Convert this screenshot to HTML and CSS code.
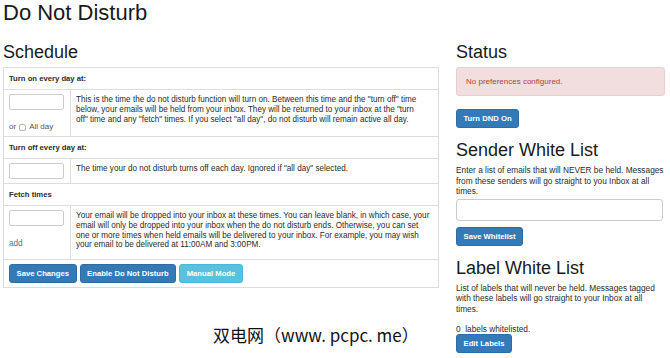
FILE: index.html
```html
<!DOCTYPE html>
<html lang="en">
<head>
  <meta charset="UTF-8">
  <meta name="viewport" content="width=device-width, initial-scale=1.0">
  <title>Do Not Disturb</title>
  <link rel="stylesheet" href="styles.css">
</head>
<body>

<div class="page">
  <h1>Do Not Disturb</h1>

  <div class="columns">
    <div class="schedule">
      <h2>Schedule</h2>
      <table class="schedule-table">
        <tr><th colspan="2">Turn on every day at:</th></tr>
        <tr>
          <td class="field">
            <input type="text" class="time-input">
            <label class="allday">or <input type="checkbox" class="check"> All day</label>
          </td>
          <td class="help">This is the time the do not disturb function will turn on. Between this time and the "turn off" time below, your emails will be held from your inbox. They will be returned to your inbox at the "turn off"&nbsp;time and any "fetch" times. If you select "all day", do not disturb will remain active all day.</td>
        </tr>
        <tr><th colspan="2">Turn off every day at:</th></tr>
        <tr>
          <td class="field"><input type="text" class="time-input"></td>
          <td class="help">The time your do not disturb turns off each day. Ignored if "all day" selected.</td>
        </tr>
        <tr><th colspan="2">Fetch times</th></tr>
        <tr>
          <td class="field">
            <input type="text" class="time-input">
            <a href="#" class="add-link">add</a>
          </td>
          <td class="help">Your email will be dropped into your inbox at these times. You can leave blank, in which case, your email will only be dropped into your inbox when the do not disturb ends. Otherwise, you can set one or more times when held emails will be delivered to your inbox. For example, you may wish your email to be delivered at 11:00AM and 3:00PM.</td>
        </tr>
        <tr>
          <td colspan="2">
            <div class="actions">
              <button class="btn btn-primary">Save Changes</button>
              <button class="btn btn-primary">Enable Do Not Disturb</button>
              <button class="btn btn-info">Manual Mode</button>
            </div>
          </td>
        </tr>
      </table>
    </div>

    <div class="sidebar">
      <h2>Status</h2>
      <div class="alert">No preferences configured.</div>
      <button class="btn btn-primary">Turn DND On</button>

      <h2 class="section">Sender White List</h2>
      <p>Enter a list of emails that will NEVER be held. Messages from these senders will go straight to you Inbox at all times.</p>
      <input type="text" class="whitelist-input">
      <button class="btn btn-primary save-whitelist">Save Whitelist</button>

      <h2 class="section">Label White List</h2>
      <p>List of labels that will never be held. Messages tagged with these labels will go straight to your Inbox at all times.</p>
      <p class="count">0 &nbsp;labels whitelisted.</p>
      <button class="btn btn-primary">Edit Labels</button>
    </div>
  </div>

  <div class="watermark">双电网（www. pcpc. me）</div>
</div>

</body>
</html>
```

FILE: styles.css
```css
body {
  margin: 0;
  font-family: "Liberation Sans", Arial, sans-serif;
  color: #2b2b2b;
  background: #fff;
}

.page {
  position: relative;
  padding: 0 5px 0 3px;
}

h1 {
  font-size: 22px;
  line-height: 24px;
  font-weight: normal;
  color: #1a1a1a;
  margin: 1px 0 0;
}

h2 {
  font-size: 18px;
  line-height: 20px;
  font-weight: normal;
  color: #1a1a1a;
  margin: 17px 0 5px;
}

.columns {
  display: grid;
  grid-template-columns: 436px 209px;
  column-gap: 17px;
  align-items: start;
}

/* schedule table */
.schedule-table {
  width: 436px;
  border-collapse: collapse;
  border: 1px solid #ddd;
  font-size: 8.15px;
}

.schedule-table th,
.schedule-table td {
  border: 1px solid #ddd;
  padding: 4px 5px;
  text-align: left;
  vertical-align: top;
}

.schedule-table th {
  font-size: 7.7px;
  line-height: 13px;
  font-weight: bold;
}

.field {
  width: 56px;
}

.schedule-table td.help {
  line-height: 9.75px;
  padding-top: 5px;
}

.time-input {
  display: block;
  box-sizing: border-box;
  width: 55px;
  height: 16px;
  margin: 0;
  border: 1px solid #ccc;
  border-radius: 2px;
  background: #fff;
}

.allday {
  display: flex;
  align-items: center;
  gap: 2px;
  margin-top: 12px;
  line-height: 10px;
  font-size: 8px;
  color: #555;
}

.check {
  appearance: none;
  width: 7px;
  height: 7px;
  margin: 0 1px;
  border: 1px solid #b5b5b5;
  border-radius: 2px;
  background: #fff;
}

.add-link {
  display: block;
  margin: 13px 0 6px;
  line-height: 10px;
  color: #337ab7;
  text-decoration: none;
}

.actions {
  display: flex;
  gap: 3px;
}

/* buttons */
.btn {
  display: inline-block;
  box-sizing: border-box;
  height: 19px;
  padding: 0 6.5px;
  font-family: "Liberation Sans", Arial, sans-serif;
  font-size: 7.7px;
  font-weight: bold;
  color: #fff;
  border: 1px solid;
  border-radius: 3px;
  cursor: pointer;
}

.btn-primary {
  background: #337ab7;
  border-color: #2e6da4;
}

.btn-info {
  background: #5bc0de;
  border-color: #46b8da;
}

/* sidebar */
.sidebar {
  display: flex;
  flex-direction: column;
  align-items: flex-start;
  font-size: 8.3px;
  line-height: 10.6px;
}

.alert {
  box-sizing: border-box;
  width: 209px;
  padding: 8px 9px;
  margin-bottom: 13px;
  line-height: 11px;
  font-size: 8px;
  color: #a94442;
  background: #f2dede;
  border: 1px solid #ebccd1;
  border-radius: 3px;
}

.sidebar h2.section {
  margin-top: 12px;
  margin-bottom: 5px;
}

.sidebar p {
  margin: 0;
}

.whitelist-input {
  display: block;
  box-sizing: border-box;
  width: 207px;
  height: 22px;
  margin: 2px 0 0;
  border: 1px solid #ccc;
  border-radius: 3px;
}

.save-whitelist {
  margin-top: 6px;
}

.sidebar .count {
  margin-top: 9px;
}

.watermark {
  position: absolute;
  left: 213px;
  top: 324px;
  font-family: "Noto Sans CJK SC", sans-serif;
  font-size: 17px;
  line-height: 20px;
  color: #111;
  text-shadow: 0 0 2px #fff;
}
```
